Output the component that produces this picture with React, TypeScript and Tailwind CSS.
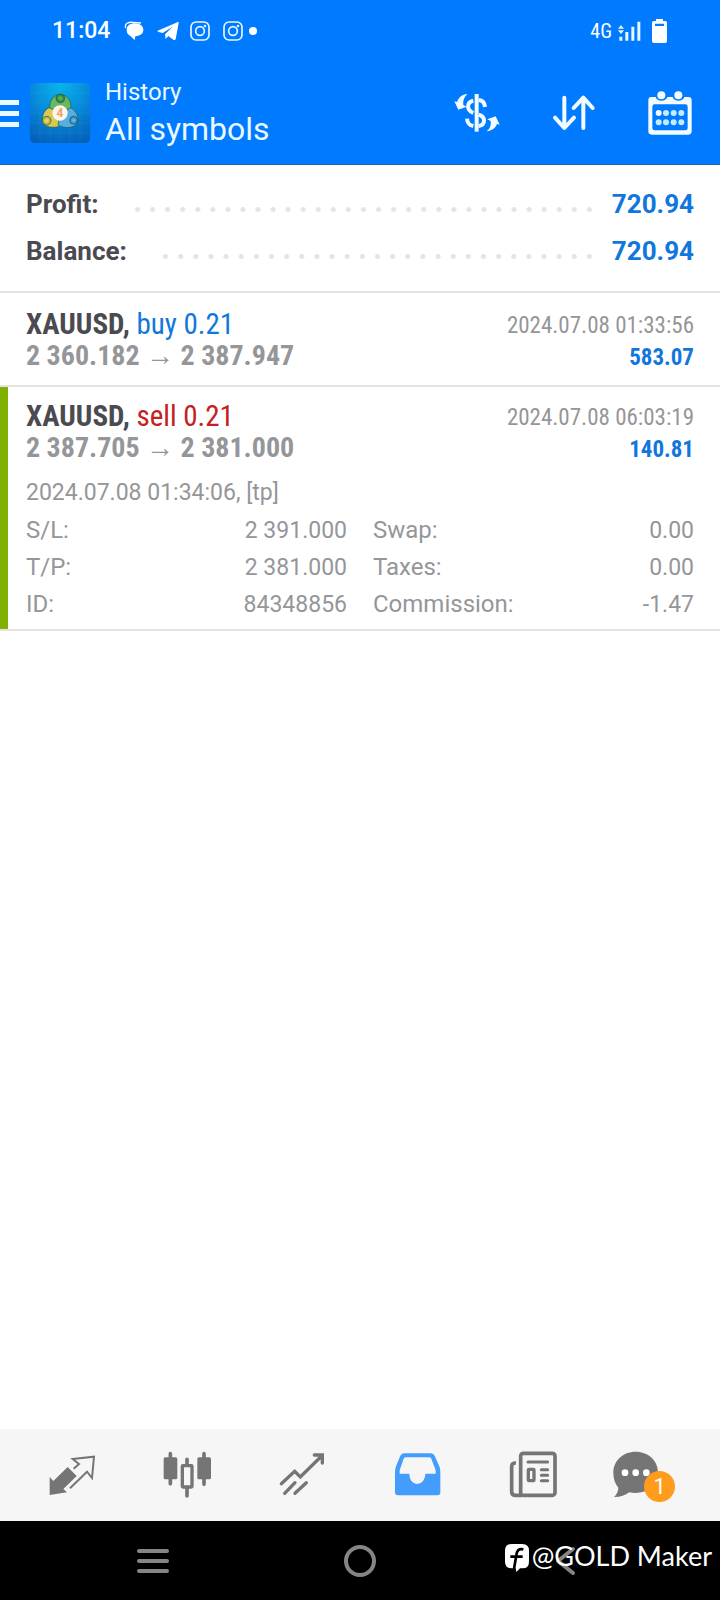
import type { ReactNode } from "react";

const condensed = "font-['Roboto_Condensed','Liberation_Sans_Narrow',Roboto,sans-serif]";

function InstagramIcon() {
  return (
    <svg className="h-5 w-5" viewBox="0 0 60 60" fill="none" stroke="#e6f6ff" strokeWidth="5" aria-hidden="true">
      <rect x="3" y="3" width="54" height="54" rx="15" />
      <circle cx="30" cy="30" r="13" />
      <circle cx="45" cy="15" r="4" fill="#e6f6ff" stroke="none" />
    </svg>
  );
}

function StatusBar() {
  return (
    <div className="flex h-[60px] items-center justify-between pt-[2px] pr-[53px] pl-[52px]">
      <div className="flex items-center">
        <span className="w-[72px] text-[23px] leading-7 font-medium">11:04</span>
        <svg className="mr-[13px] h-5 w-5" viewBox="373 63 60 60" aria-hidden="true">
          <path d="M378 84C374 70 386 66 400 67L424 69" fill="none" stroke="#fff" strokeWidth="4" />
          <path d="M381 90C381 77 390 70 406 70C422 70 431 79 431 90C431 101 423 107 407 109L405 120L392 108C384 104 381 98 381 90Z" fill="#fff" />
        </svg>
        <svg className="mr-[11px] h-5 w-[22px]" viewBox="469 63 66 60" fill="#fff" aria-hidden="true">
          <path d="M471 92L532 66C534 65 535 67 534 69L525 117C524 121 521 121 518 119L503 108L495 117L493 103L516 80L486 99L471 95Z" />
        </svg>
        <InstagramIcon />
        <span className="w-[13px]" />
        <InstagramIcon />
        <span className="ml-[6px] h-2 w-2 rounded-full bg-white" />
      </div>
      <div className="flex items-center">
        <span className={`text-[20px] leading-6 ${condensed}`}>4G</span>
        <svg className="ml-[6px] h-5 w-[23px]" viewBox="773 58 69 60" fill="#e8f8ff" aria-hidden="true">
          <path d="M773 81L782 70L791 81ZM773 86L782 97L791 86ZM777 105h9v12h-9zM795 91h9v26h-9zM813 75h9v42h-9zM831 60h9v57h-9z" />
        </svg>
        <svg className="ml-[11px] h-6 w-[15px]" viewBox="876 54 45 72" fill="#fff" aria-hidden="true">
          <path fillRule="evenodd" d="M888 54h21v6h6q6 0 6 6v54q0 6-6 6h-33q-6 0-6-6V66q0-6 6-6h6zM885 68v7h27v-7z" />
        </svg>
      </div>
    </div>
  );
}

function AppLogo() {
  return (
    <svg className="h-[60px] w-[60px]" viewBox="0 0 180 180" role="img" aria-label="MetaTrader 4">
      <defs>
        <radialGradient id="tile" cx="0.5" cy="0.05" r="1">
          <stop offset="0" stopColor="#08b4ec" />
          <stop offset="0.5" stopColor="#0787d8" />
          <stop offset="1" stopColor="#0560b8" />
        </radialGradient>
        <radialGradient id="leaf"><stop offset="0" stopColor="#6fbf5e" /><stop offset="1" stopColor="#1f7a3c" /></radialGradient>
        <radialGradient id="gold"><stop offset="0" stopColor="#f2e37a" /><stop offset="1" stopColor="#b3a232" /></radialGradient>
        <radialGradient id="sky"><stop offset="0" stopColor="#7cc4f0" /><stop offset="1" stopColor="#1f78bd" /></radialGradient>
      </defs>
      <rect width="180" height="180" rx="14" fill="url(#tile)" />
      <path d="M0 30H180M0 60H180M0 90H180M0 120H180M0 150H180M30 0V180M60 0V180M90 0V180M120 0V180M150 0V180" stroke="#38b6f0" strokeOpacity="0.2" strokeWidth="2" />
      <g stroke="#155a58" strokeWidth="2">
        <path d="M91 35C112 35 124 52 123 78L90 90L59 78C58 52 70 35 91 35Z" fill="#6bb65e" />
        <path d="M57 74C40 82 35 104 37 118C42 132 72 138 92 128L90 90Z" fill="#d9cb50" />
        <path d="M123 74C141 86 147 104 143 118C138 134 106 140 84 126L90 90Z" fill="#58addf" />
        <circle cx="91" cy="46" r="13" fill="url(#leaf)" />
        <circle cx="50" cy="113" r="13" fill="url(#gold)" />
        <circle cx="131" cy="112" r="12" fill="url(#sky)" />
      </g>
      <circle cx="90" cy="90" r="23" fill="#fbf7f0" />
      <text x="90" y="103" textAnchor="middle" fontSize="36" fontWeight="700" fill="#f3a25c" className="font-['Roboto',sans-serif]">4</text>
    </svg>
  );
}

function Toolbar() {
  return (
    <header className="flex h-[105px] items-center border-b border-[#1667b8] pt-[2px] pr-[28px]">
      <button type="button" aria-label="Open menu" className="mr-[11px] flex w-[19px] flex-col gap-[6px]">
        <span className="h-[5px] bg-[#eaf9ff]" />
        <span className="h-[5px] bg-[#eaf9ff]" />
        <span className="h-[5px] bg-[#eaf9ff]" />
      </button>
      <AppLogo />
      <div className="ml-[15px] flex-1">
        <p className="text-[24px] leading-8 text-[#eaf8ff]">History</p>
        <h1 className="text-[32px] leading-[42px] text-[#eaf8ff]">All symbols</h1>
      </div>
      <button type="button" aria-label="Currency" className="mr-[52px]">
        <svg className="h-10 w-[46px]" viewBox="284 278 138 120" aria-hidden="true">
          <g fill="none" stroke="#f2fcff" strokeWidth="12">
            <path d="M352 281V394" />
            <path d="M358 299C371 300 376 307 377 320M342 301C322 305 320 328 342 338M358 343C380 350 379 373 358 377M342 377C329 374 324 369 323 355" />
          </g>
          <path fill="#f2fcff" d="M324 281C308 282 297 292 293 305L285 303L297 328L322 319L312 314C310 302 314 291 324 281ZM382 393C398 392 409 382 413 371L421 373L409 348L384 357L394 362C396 374 392 385 382 393Z" />
        </svg>
      </button>
      <button type="button" aria-label="Sort" className="mr-[52px]">
        <svg className="h-10 w-[44px]" viewBox="578 278 132 120" fill="none" stroke="#f2fcff" strokeWidth="12" strokeLinecap="round" strokeLinejoin="round" aria-hidden="true">
          <path d="M615 292V382M587 352L615 383L644 352M672 383V293M643 323L672 292L700 323" />
        </svg>
      </button>
      <button type="button" aria-label="Select period">
        <svg className="h-[44px] w-[44px]" viewBox="866 269 132 132" aria-hidden="true">
          <path fill="#f2fcff" fillRule="evenodd" d="M876 287H889C893 302 920 302 924 287H940C944 302 971 302 975 287H987Q997 287 997 297V390Q997 400 987 400H877Q867 400 867 390V297Q867 287 876 287ZM886 309Q879 309 879 316V380Q879 387 886 387H978Q985 387 985 380V316Q985 309 978 309Z" />
          <circle cx="906" cy="282" r="12" fill="#f2fcff" />
          <circle cx="957" cy="282" r="12" fill="#f2fcff" />
          <g fill="#c4ecff">
            <circle cx="898" cy="335" r="9" fill="#f2fcff" /><circle cx="920" cy="335" r="9" /><circle cx="943" cy="335" r="9" /><circle cx="966" cy="335" r="9" />
            <circle cx="898" cy="363" r="9" /><circle cx="920" cy="363" r="9" /><circle cx="943" cy="363" r="9" /><circle cx="966" cy="363" r="9" />
          </g>
        </svg>
      </button>
    </header>
  );
}

function SummaryRow({ label, value }: { label: string; value: string }) {
  return (
    <div className="flex h-[47px] items-center text-[26px] leading-8 font-bold">
      <dt className="text-[#4a4a50]">{label}</dt>
      <span className="mt-[11px] mr-[15px] ml-[31px] h-[5px] flex-1 bg-[radial-gradient(circle,#e4e4e4_2px,transparent_3px)] bg-[length:15px_5px] [background-repeat:space_no-repeat]" />
      <dd className="text-[#1277dc]">{value}</dd>
    </div>
  );
}

interface Trade {
  side: "buy" | "sell";
  open: string;
  close: string;
  time: string;
  profit: string;
}

function TradeHead({ side, open, close, time, profit }: Trade) {
  return (
    <div className={`flex justify-between ${condensed}`}>
      <div className="leading-8">
        <p className="text-[29px] leading-8">
          <b className="text-[#4a4a50]">XAUUSD,</b>{" "}
          <span className={side === "buy" ? "text-[#1277dc]" : "text-[#c4201f]"}>{side} 0.21</span>
        </p>
        <p className="text-[28px] leading-8 font-bold text-[#959699]">
          {open} <span className="font-normal">→</span> {close}
        </p>
      </div>
      <div className="pt-[2px] text-right text-[23px] leading-8">
        <p className="text-[#959699]">{time}</p>
        <p className="font-bold text-[#1277dc]">{profit}</p>
      </div>
    </div>
  );
}

const details = [
  ["S/L:", "2 391.000"],
  ["Swap:", "0.00"],
  ["T/P:", "2 381.000"],
  ["Taxes:", "0.00"],
  ["ID:", "84348856"],
  ["Commission:", "-1.47"],
];

function NavButton({ label, children }: { label: string; children: ReactNode }) {
  return (
    <button type="button" aria-label={label} className="flex h-full flex-1 items-center justify-center">
      {children}
    </button>
  );
}

function BottomNav() {
  return (
    <nav className="flex h-[92px] items-center bg-[#f6f6f6] px-[14px] text-[#757575]">
      <NavButton label="Quotes">
        <svg className="h-12 w-12" viewBox="145 92 144 144" aria-hidden="true">
          <path fill="currentColor" d="M150 170L161 182L204 140L231 167L191 206L202 216L150 224Z" />
          <path fill="none" stroke="currentColor" strokeWidth="6" d="M222 145L238 131L219 116L283 109L277 173L262 154L211 204" />
        </svg>
      </NavButton>
      <NavButton label="Charts">
        <svg className="h-12 w-12" viewBox="490 92 144 144" aria-hidden="true">
          <path fill="none" stroke="currentColor" strokeWidth="11" strokeLinecap="round" d="M512 100V190M613 100V192M562 117V134M562 202V227" />
          <rect x="492" y="111" width="41" height="66" rx="5" fill="currentColor" />
          <rect x="593" y="111" width="41" height="66" rx="5" fill="currentColor" />
          <rect x="548" y="136" width="29" height="64" rx="2" fill="none" stroke="currentColor" strokeWidth="10" />
        </svg>
      </NavButton>
      <NavButton label="Trade">
        <svg className="h-12 w-12" viewBox="835 92 144 144" fill="none" stroke="currentColor" strokeWidth="10" strokeLinecap="round" aria-hidden="true">
          <path d="M845 190L885 153L902 170L966 107M944 104H968V128M855 219L886 187M886 219L920 187" />
        </svg>
      </NavButton>
      <NavButton label="History">
        <svg className="h-12 w-12" viewBox="102 92 144 144" aria-hidden="true">
          <path fill="#449cfc" fillRule="evenodd" d="M134 99H212Q220 99 224 106L238 138Q241 146 241 156V216Q241 225 232 225H114Q105 225 105 216V156Q105 146 108 138L121 106Q125 99 134 99ZM138 111Q133 111 131 115L119 150V160H148C149 201 194 201 196 160H227V150L214 115Q212 111 207 111Z" />
        </svg>
      </NavButton>
      <NavButton label="News">
        <svg className="h-12 w-12" viewBox="447 92 144 144" fill="none" stroke="currentColor" strokeWidth="11" aria-hidden="true">
          <rect x="482" y="99" width="103" height="126" rx="8" />
          <path d="M468 128Q455 127 455 139V214Q455 225 468 225H486" />
          <path strokeWidth="9" strokeLinecap="round" d="M504 125H563M544 148H563M544 165H563M544 181H563" />
          <rect x="505" y="147" width="17" height="34" rx="2" strokeWidth="10" />
        </svg>
      </NavButton>
      <NavButton label="Messages, 1 unread">
        <span className="relative flex">
          <svg className="h-12 w-[72px]" viewBox="757 92 216 144" aria-hidden="true">
            <path fill="currentColor" d="M828 94C867 94 895 122 895 156C895 192 865 218 828 218C821 218 815 217 809 216C795 226 779 231 763 230C772 222 776 211 776 202C766 190 761 175 761 157C761 121 790 94 828 94Z" />
            <circle cx="796" cy="157" r="10" fill="#fff" /><circle cx="828" cy="157" r="10" fill="#fff" /><circle cx="860" cy="157" r="10" fill="#fff" />
          </svg>
          <span className="absolute top-5 left-8 flex h-[31px] w-[31px] items-center justify-center rounded-full bg-[#ff9c1c] text-[22px] leading-none text-white">1</span>
        </span>
      </NavButton>
    </nav>
  );
}

function SystemBar() {
  return (
    <div className="relative flex h-[79px] items-center justify-around bg-black px-[50px] text-[#858585]">
      <button type="button" aria-label="Recent apps">
        <svg className="h-9 w-9" viewBox="0 0 36 36" fill="none" stroke="currentColor" strokeWidth="4" strokeLinecap="round" aria-hidden="true">
          <path d="M4 8H32M4 18H32M4 28H32" />
        </svg>
      </button>
      <button type="button" aria-label="Home">
        <svg className="h-9 w-9" viewBox="0 0 36 36" fill="none" stroke="currentColor" strokeWidth="4" aria-hidden="true">
          <circle cx="18" cy="18" r="14" />
        </svg>
      </button>
      <button type="button" aria-label="Back">
        <svg className="h-9 w-9" viewBox="0 0 36 36" fill="none" stroke="currentColor" strokeWidth="4" strokeLinecap="round" strokeLinejoin="round" aria-hidden="true">
          <path d="M24 6L9 18L24 30" />
        </svg>
      </button>
      <div className="absolute top-[15px] right-[8px] flex items-center gap-[2px] text-white">
        <svg className="mt-[3px] h-[30px] w-[26px]" viewBox="438 369 78 90" aria-hidden="true">
          <path fill="#fff" d="M461 372H493Q513 372 513 392V425Q513 445 493 445H486L475 456L473 445H461Q441 445 441 425V392Q441 372 461 372Z" />
          <path fill="none" stroke="#000" strokeWidth="8" d="M496 388C481 385 477 392 475 406L468 447M457 410H494" />
        </svg>
        <span className="font-['Lato',sans-serif] text-[27px] leading-10">@GOLD Maker</span>
      </div>
    </div>
  );
}

export default function App() {
  return (
    <div className="flex min-h-screen flex-col bg-white font-['Roboto',sans-serif]">
      <div className="bg-[#007aff] text-white">
        <StatusBar />
        <Toolbar />
      </div>
      <main className="flex-1">
        <dl className="border-b-2 border-[#e4e4e4] px-[26px] pt-[15px] pb-[17px]">
          <SummaryRow label="Profit:" value="720.94" />
          <SummaryRow label="Balance:" value="720.94" />
        </dl>
        <section className="border-b-2 border-[#e4e4e4] px-[26px] pt-[15px] pb-[11px]">
          <TradeHead side="buy" open="2 360.182" close="2 387.947" time="2024.07.08 01:33:56" profit="583.07" />
        </section>
        <section className="flex border-b-2 border-[#e4e4e4]">
          <span className="w-2 bg-[#80b000]" />
          <div className="flex-1 pt-[13px] pr-[26px] pb-[6px] pl-[18px]">
            <TradeHead side="sell" open="2 387.705" close="2 381.000" time="2024.07.08 06:03:19" profit="140.81" />
            <div className="pt-[7px] text-[24px] text-[#959699]">
              <p className="text-[23px] leading-[39px]">2024.07.08 01:34:06, [tp]</p>
              <dl className="grid grid-cols-2 gap-x-[26px]">
                {details.map(([name, value]) => (
                  <div key={name} className="flex justify-between leading-[37px]">
                    <dt>{name}</dt>
                    <dd className="text-[23px]">{value}</dd>
                  </div>
                ))}
              </dl>
            </div>
          </div>
        </section>
      </main>
      <BottomNav />
      <SystemBar />
    </div>
  );
}
